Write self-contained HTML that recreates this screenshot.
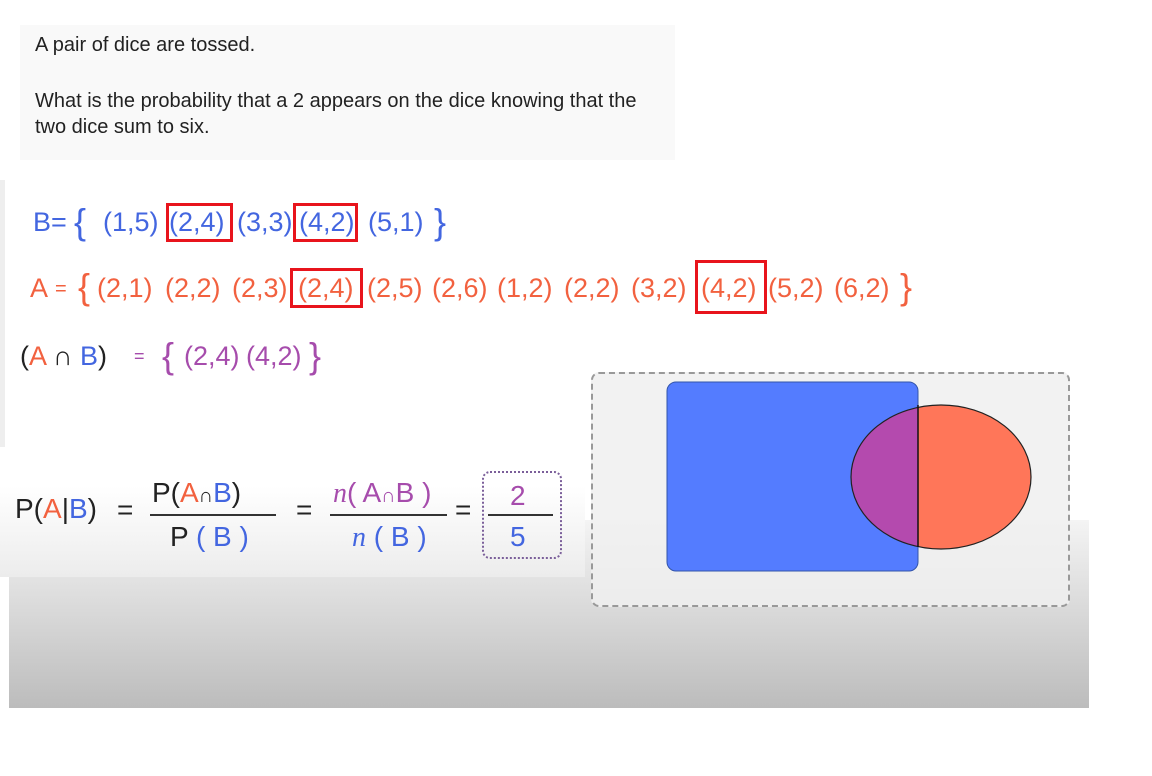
<!DOCTYPE html>
<html><head><style>
body{margin:0;width:1152px;height:776px;position:relative;background:#fff;overflow:hidden;font-family:"Liberation Sans",sans-serif;}
.a{position:absolute;white-space:nowrap;}
.bl{color:#4366e0}.or{color:#f2613f}.pu{color:#a64cac}.bk{color:#222}
.rb{position:absolute;border:3px solid #e8141c;box-sizing:border-box;}
.b{top:207px;font-size:27px;color:#4366e0}
.o{top:273px;font-size:27px;color:#f2613f}
.p{top:341px;font-size:27px;color:#a64cac}
.br{font-size:36px;top:-6px}
</style></head><body>
<div class="a" style="left:9px;top:520px;width:1080px;height:188px;background:linear-gradient(#f4f4f4,#bcbcbc)"></div>
<div class="a" style="left:0;top:180px;width:5px;height:267px;background:#eee"></div>
<div class="a" style="left:20px;top:25px;width:655px;height:135px;background:#f9f9f9"></div>
<div class="a" style="left:35px;top:34px;font-size:20px;color:#222">A pair of dice are tossed.</div>
<div class="a" style="left:35px;top:88px;font-size:20px;color:#222;line-height:26px">What is the probability that a 2 appears on the dice knowing that the<br>two dice sum to six.</div>

<div class="a b" style="left:33px">B=</div>
<div class="a b" style="left:74px;top:201px;font-size:36px">{</div>
<div class="a b" style="left:103px">(1,5)</div>
<div class="a b" style="left:169px">(2,4)</div>
<div class="a b" style="left:237px">(3,3)</div>
<div class="a b" style="left:299px">(4,2)</div>
<div class="a b" style="left:368px">(5,1)</div>
<div class="a b" style="left:434px;top:201px;font-size:36px">}</div>
<div class="rb" style="left:166px;top:203px;width:67px;height:39px"></div>
<div class="rb" style="left:293px;top:203px;width:65px;height:39px"></div>

<div class="a o" style="left:30px">A</div>
<div class="a o" style="left:55px;font-size:20px;top:278px">=</div>
<div class="a o" style="left:78px;top:266px;font-size:36px">{</div>
<div class="a o" style="left:97px">(2,1)</div>
<div class="a o" style="left:165px">(2,2)</div>
<div class="a o" style="left:232px">(2,3)</div>
<div class="a o" style="left:298px">(2,4)</div>
<div class="a o" style="left:367px">(2,5)</div>
<div class="a o" style="left:432px">(2,6)</div>
<div class="a o" style="left:497px">(1,2)</div>
<div class="a o" style="left:564px">(2,2)</div>
<div class="a o" style="left:631px">(3,2)</div>
<div class="a o" style="left:701px">(4,2)</div>
<div class="a o" style="left:768px">(5,2)</div>
<div class="a o" style="left:834px">(6,2)</div>
<div class="a o" style="left:900px;top:266px;font-size:36px">}</div>
<div class="rb" style="left:290px;top:268px;width:73px;height:40px"></div>
<div class="rb" style="left:695px;top:260px;width:72px;height:54px"></div>

<div class="a" style="left:20px;top:341px;font-size:27px"><span class="bk">(</span><span class="or">A</span> <span class="bk">∩</span> <span class="bl">B</span><span class="bk">)</span></div>
<div class="a pu" style="left:134px;top:346px;font-size:18px">=</div>
<div class="a p" style="left:162px;top:335px;font-size:36px">{</div>
<div class="a p" style="left:184px">(2,4)</div>
<div class="a p" style="left:246px">(4,2)</div>
<div class="a p" style="left:309px;top:335px;font-size:36px">}</div>

<div class="a" style="left:0;top:447px;width:585px;height:130px;background:linear-gradient(#fff 30%,#ececec)"></div>
<div class="a" style="left:15px;top:493px;font-size:28px"><span class="bk">P(</span><span class="or">A</span><span class="bk">|</span><span class="bl">B</span><span class="bk">)</span></div>
<div class="a bk" style="left:117px;top:494px;font-size:28px">=</div>
<div class="a" style="left:152px;top:477px;font-size:28px"><span class="bk">P(</span><span class="or">A</span><span class="bk" style="font-size:20px">∩</span><span class="bl">B</span><span class="bk">)</span></div>
<div class="a" style="left:150px;top:514px;width:126px;height:2px;background:#333"></div>
<div class="a" style="left:170px;top:521px;font-size:28px"><span class="bk">P</span><span class="bl"> ( B )</span></div>
<div class="a bk" style="left:296px;top:494px;font-size:28px">=</div>
<div class="a pu" style="left:333px;top:477px;font-size:28px"><i style="font-family:'Liberation Serif',serif">n</i>( A<span style="font-size:20px">∩</span>B )</div>
<div class="a" style="left:330px;top:514px;width:117px;height:2px;background:#333"></div>
<div class="a bl" style="left:352px;top:521px;font-size:28px"><i style="font-family:'Liberation Serif',serif">n</i> ( B )</div>
<div class="a bk" style="left:455px;top:494px;font-size:28px">=</div>
<div class="a" style="left:482px;top:471px;width:80px;height:88px;border:2px dotted #7b5f9a;border-radius:8px;box-sizing:border-box"></div>
<div class="a pu" style="left:510px;top:480px;font-size:28px">2</div>
<div class="a" style="left:488px;top:514px;width:65px;height:2px;background:#333"></div>
<div class="a bl" style="left:510px;top:521px;font-size:28px">5</div>

<div class="a" style="left:591px;top:372px;width:479px;height:235px;border:2px dashed #999;border-radius:8px;box-sizing:border-box;background:rgba(240,240,240,0.85)"></div>
<svg class="a" style="left:0;top:0" width="1152" height="776">
<rect x="667" y="382" width="251" height="189" rx="9" fill="#547cff" stroke="#3355aa" stroke-width="1"/>
<clipPath id="c"><rect x="918" y="300" width="200" height="300"/></clipPath>
<clipPath id="d"><rect x="800" y="300" width="118" height="300"/></clipPath>
<ellipse cx="941" cy="477" rx="90" ry="72" fill="#ff7659" clip-path="url(#c)"/>
<ellipse cx="941" cy="477" rx="90" ry="72" fill="#b44aae" clip-path="url(#d)"/>
<ellipse cx="941" cy="477" rx="90" ry="72" fill="none" stroke="#222" stroke-width="1.2"/>
<line x1="918" y1="405" x2="918" y2="547" stroke="#111" stroke-width="1.5"/>
</svg>
</body></html>
